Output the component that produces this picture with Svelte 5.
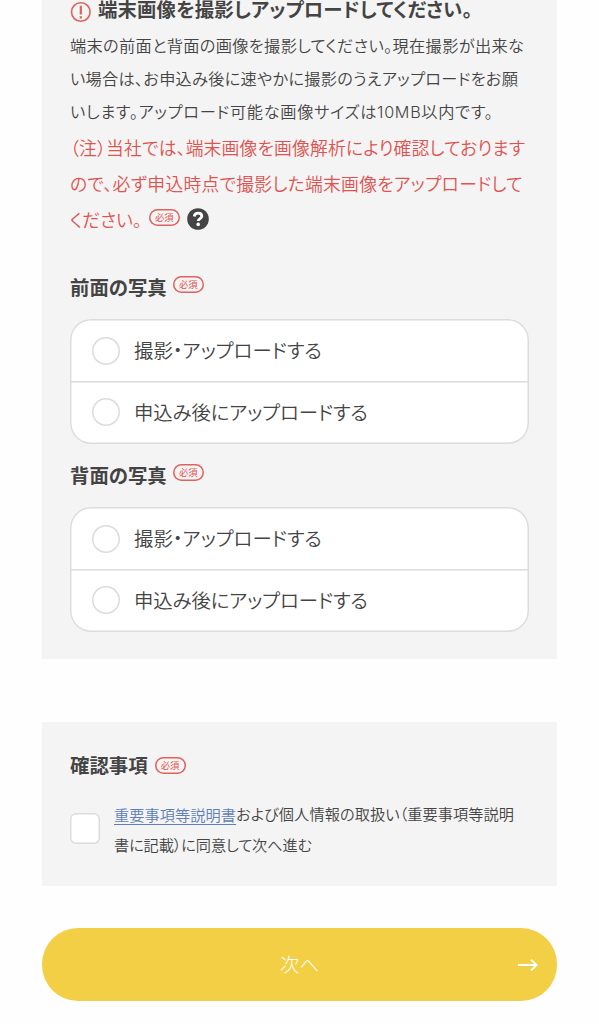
<script>
  const intro = [
    { text: '端末の前面と背面の画像を撮影してください。現在撮影が出来な', cls: 'a' },
    { text: 'い場合は、お申込み後に速やかに撮影のうえアップロードをお願', cls: 'b' },
    { text: 'いします。アップロード可能な画像サイズは10MB以内です。', cls: 'c' }
  ];
  const sides = ['前面の写真', '背面の写真'];
  const options = ['撮影・アップロードする', '申込み後にアップロードする'];
</script>

{#snippet required()}
  <span class="badge">必須</span>
{/snippet}

<main>
  <section class="panel photos">
    <h2>
      <svg width="22" height="22" viewBox="0 0 22 22" fill="none" stroke="#e0615d">
        <circle cx="10.8" cy="11" r="9.3" stroke-width="1.6" />
        <path d="M10.8 4.8v8.8M10.8 15.2v2.2" stroke-width="2.2" />
      </svg>
      <span class="title">端末画像を撮影しアップロードしてください。</span>
    </h2>
    <p class="intro">
      {#each intro as line}<span class="line {line.cls}">{line.text}</span>{/each}
    </p>
    <div class="note">
      <span class="line d">（注）当社では、端末画像を画像解析により確認しております</span>
      <span class="line e">ので、必ず申込時点で撮影した端末画像をアップロードして</span>
      <div class="last">
        <span>ください。</span>
        {@render required()}
        <svg class="help" width="22" height="22" viewBox="0 0 22 22">
          <circle cx="11" cy="11" r="10.8" fill="#444" />
          <path d="M7.3 8.5C7.5 6.4 9 5.2 11.1 5.2C13.2 5.2 14.8 6.4 14.8 8.2C14.8 10.5 11.2 10.6 11.2 13" fill="none" stroke="#fff" stroke-width="2.8" />
          <circle cx="11.2" cy="16.4" r="1.8" fill="#fff" />
        </svg>
      </div>
    </div>
    {#each sides as side}
      <div class="group">
        <h3><span>{side}</span>{@render required()}</h3>
        <div class="options">
          {#each options as option, i}
            <label class="option">
              <span class="radio"></span>
              <span class="o{i}">{option}</span>
            </label>
          {/each}
        </div>
      </div>
    {/each}
  </section>

  <section class="panel confirm">
    <h3><span>確認事項</span>{@render required()}</h3>
    <div class="agree">
      <span class="checkbox"></span>
      <p>
        <span class="line g"><a href="#terms">重要事項等説明書</a>および個人情報の取扱い（重要事項等説明</span>
        <span class="line h">書に記載）に同意して次へ進む</span>
      </p>
    </div>
  </section>

  <button type="button">
    <span class="spacer"></span>
    <span class="next">次へ</span>
    <svg width="20" height="14" viewBox="0 0 20 14" fill="none" stroke="#fff" stroke-width="1.9">
      <path d="M0 7H18.6M13 1.6L18.6 7L13 12.4" />
    </svg>
  </button>
</main>

<style>
  :global(body) {
    background: #fefefe;
  }
  main {
    box-sizing: border-box;
    height: 1024px;
    padding: 0 42px;
    overflow: hidden;
    color: #444;
    font-family: 'Noto Sans CJK JP', sans-serif;
    font-feature-settings: 'palt';
    font-weight: 350;
  }
  h2, h3, p {
    margin: 0;
  }
  .panel {
    box-sizing: border-box;
    background: #f4f4f4;
    padding: 0 28px;
  }
  .photos {
    height: 659px;
  }
  h2 {
    display: flex;
    align-items: center;
    height: 28px;
    gap: 6px;
    font-size: 19.4px;
    line-height: 20px;
    letter-spacing: 0.13px;
    white-space: nowrap;
  }
  h2 svg {
    margin-top: -5px;
  }
  h2 .title {
    margin-top: -10px;
  }
  .line {
    display: block;
    white-space: nowrap;
  }
  .intro {
    font-size: 16.2px;
    line-height: 33.3px;
    padding-top: 1px;
  }
  .a {
    letter-spacing: 0.35px;
  }
  .b {
    letter-spacing: 0.28px;
  }
  .c {
    height: 33.3px;
    font-family: Inter, 'Noto Sans CJK JP', sans-serif;
    letter-spacing: 0.7px;
  }
  .note {
    color: #e0524f;
    font-size: 17.8px;
    line-height: 35.8px;
    padding-top: 1.5px;
  }
  .d {
    letter-spacing: 0.18px;
  }
  .e {
    letter-spacing: 0.28px;
  }
  .last {
    display: flex;
    align-items: center;
    height: 36px;
  }
  .badge {
    width: 31px;
    height: 17px;
    border-radius: 9px;
    box-shadow: inset 0 0 0 1.5px #e0615d;
    color: #e0524f;
    font-size: 9.3px;
    font-weight: 400;
    line-height: 16px;
    text-align: center;
  }
  .last .badge {
    margin: -4px 7px 0 7px;
  }
  .help {
    margin-top: -2px;
  }
  .group {
    height: 188px;
  }
  .note + .group {
    margin-top: 31px;
  }
  h3 {
    display: flex;
    align-items: center;
    gap: 6px;
    height: 36px;
    font-size: 19.4px;
    line-height: 36px;
  }
  h3 .badge {
    margin-top: -4px;
  }
  .options {
    box-sizing: border-box;
    width: 459px;
    height: 125px;
    margin-top: 14px;
    padding: 2px 1px;
    box-shadow: inset 0 0 0 1.5px #dcdcdc;
    border-radius: 21px;
    background: #fff;
  }
  .option {
    box-sizing: border-box;
    display: flex;
    align-items: center;
    gap: 14px;
    height: 60px;
    padding-left: 21px;
    font-size: 19.4px;
    line-height: 26px;
    white-space: nowrap;
  }
  .option > span:last-child {
    margin-top: -1px;
  }
  .o1 {
    letter-spacing: -0.12px;
  }
  .option + .option {
    height: 61px;
    padding-top: 2px;
    box-shadow: inset 0 1.5px #dcdcdc;
  }
  .radio {
    width: 28px;
    height: 28px;
    box-shadow: inset 0 0 0 1.5px #dcdcdc;
    border-radius: 50%;
  }
  .confirm {
    height: 164px;
    margin-top: 63px;
    padding-top: 25px;
  }
  .confirm h3 {
    gap: 7px;
  }
  .confirm .badge {
    margin-top: 0;
  }
  .agree {
    display: flex;
    align-items: center;
    gap: 14px;
    padding-top: 15px;
  }
  .checkbox {
    flex: none;
    width: 30px;
    height: 31px;
    box-shadow: inset 0 0 0 1.5px #dcdcdc;
    border-radius: 6px;
    background: #fff;
  }
  .agree p {
    font-size: 15.2px;
    line-height: 30.5px;
  }
  .g {
    letter-spacing: 0.08px;
  }
  .h {
    letter-spacing: -0.1px;
  }
  a {
    color: #5f7fb8;
    text-underline-offset: 2.5px;
    position: relative;
    top: 1px;
  }
  button {
    box-sizing: border-box;
    display: flex;
    align-items: center;
    justify-content: space-between;
    width: 515px;
    height: 72.5px;
    margin-top: 42.3px;
    padding: 0 19px;
    border: 0;
    border-radius: 36px;
    background: #f3cf45;
    color: #fff;
    font: inherit;
    font-feature-settings: 'palt';
    font-weight: 300;
    font-size: 19.4px;
  }
  .next {
    margin-top: -3px;
  }
  .spacer {
    width: 20px;
  }
</style>
